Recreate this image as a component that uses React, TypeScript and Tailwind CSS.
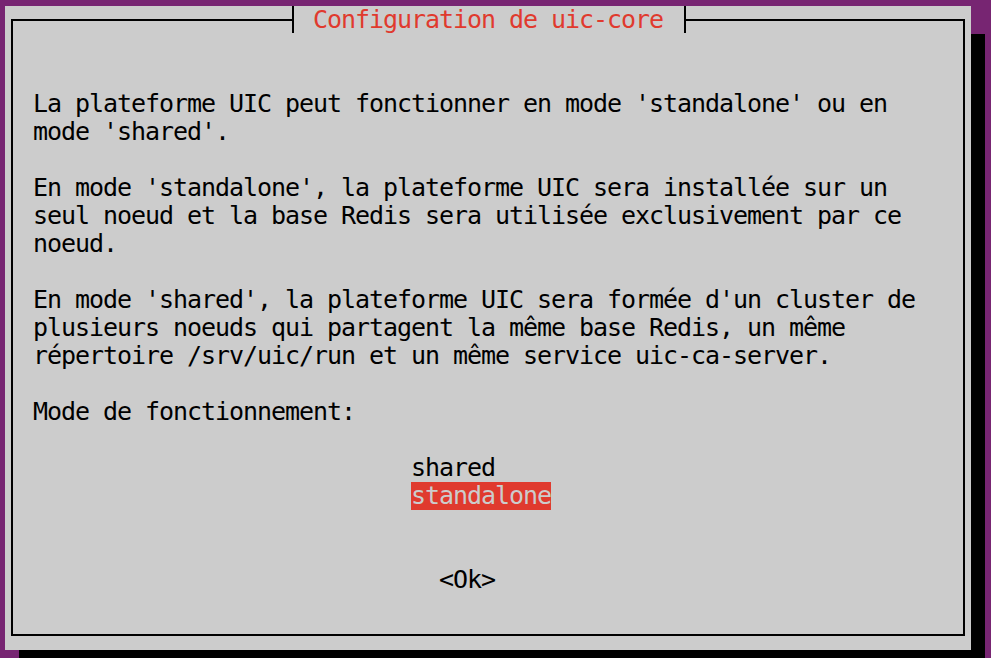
const paragraphs: string[][] = [
  ["La plateforme UIC peut fonctionner en mode 'standalone' ou en", "mode 'shared'."],
  [
    "En mode 'standalone', la plateforme UIC sera installée sur un",
    "seul noeud et la base Redis sera utilisée exclusivement par ce",
    "noeud.",
  ],
  [
    "En mode 'shared', la plateforme UIC sera formée d'un cluster de",
    "plusieurs noeuds qui partagent la même base Redis, un même",
    "répertoire /srv/uic/run et un même service uic-ca-server.",
  ],
  ["Mode de fonctionnement:"],
];

function Line({ text }: { text: string }) {
  return <div className="h-[28px] whitespace-pre">{text}</div>;
}

export default function App() {
  return (
    <div className="w-[991px] h-[658px] overflow-hidden bg-[#772572] pt-[6px] pl-[5px] font-['DejaVu_Sans_Mono',monospace] text-[25px] leading-[28px] tracking-[-1.05px] text-black">
      <div className="w-[966px] h-[644px] bg-[#cccccc] pt-[13px] pl-[6px] shadow-[14px_28px_0_0_#000]">
        <div className="relative w-[954px] h-[617px] border-2 border-black pt-[69px] pl-[20px]">
          <div className="absolute left-[279px] top-[-15px] w-[394px] h-[27px] bg-[#cccccc] border-x-2 border-black pl-[19px] text-[#e03a2e] whitespace-pre">
            Configuration de uic-core
          </div>

          {paragraphs.map((p, i) => (
            <div key={i} className="mb-[28px]">
              {p.map((l, j) => (
                <Line key={j} text={l} />
              ))}
            </div>
          ))}

          <div className="ml-[378px]">
            <div className="h-[28px]">shared</div>
            <div className="h-[28px] w-fit bg-[#e03a2e] text-[#cccccc]">standalone</div>
          </div>

          <div className="ml-[406px] mt-[56px] h-[28px] whitespace-pre">{"<Ok>"}</div>
        </div>
      </div>
    </div>
  );
}
